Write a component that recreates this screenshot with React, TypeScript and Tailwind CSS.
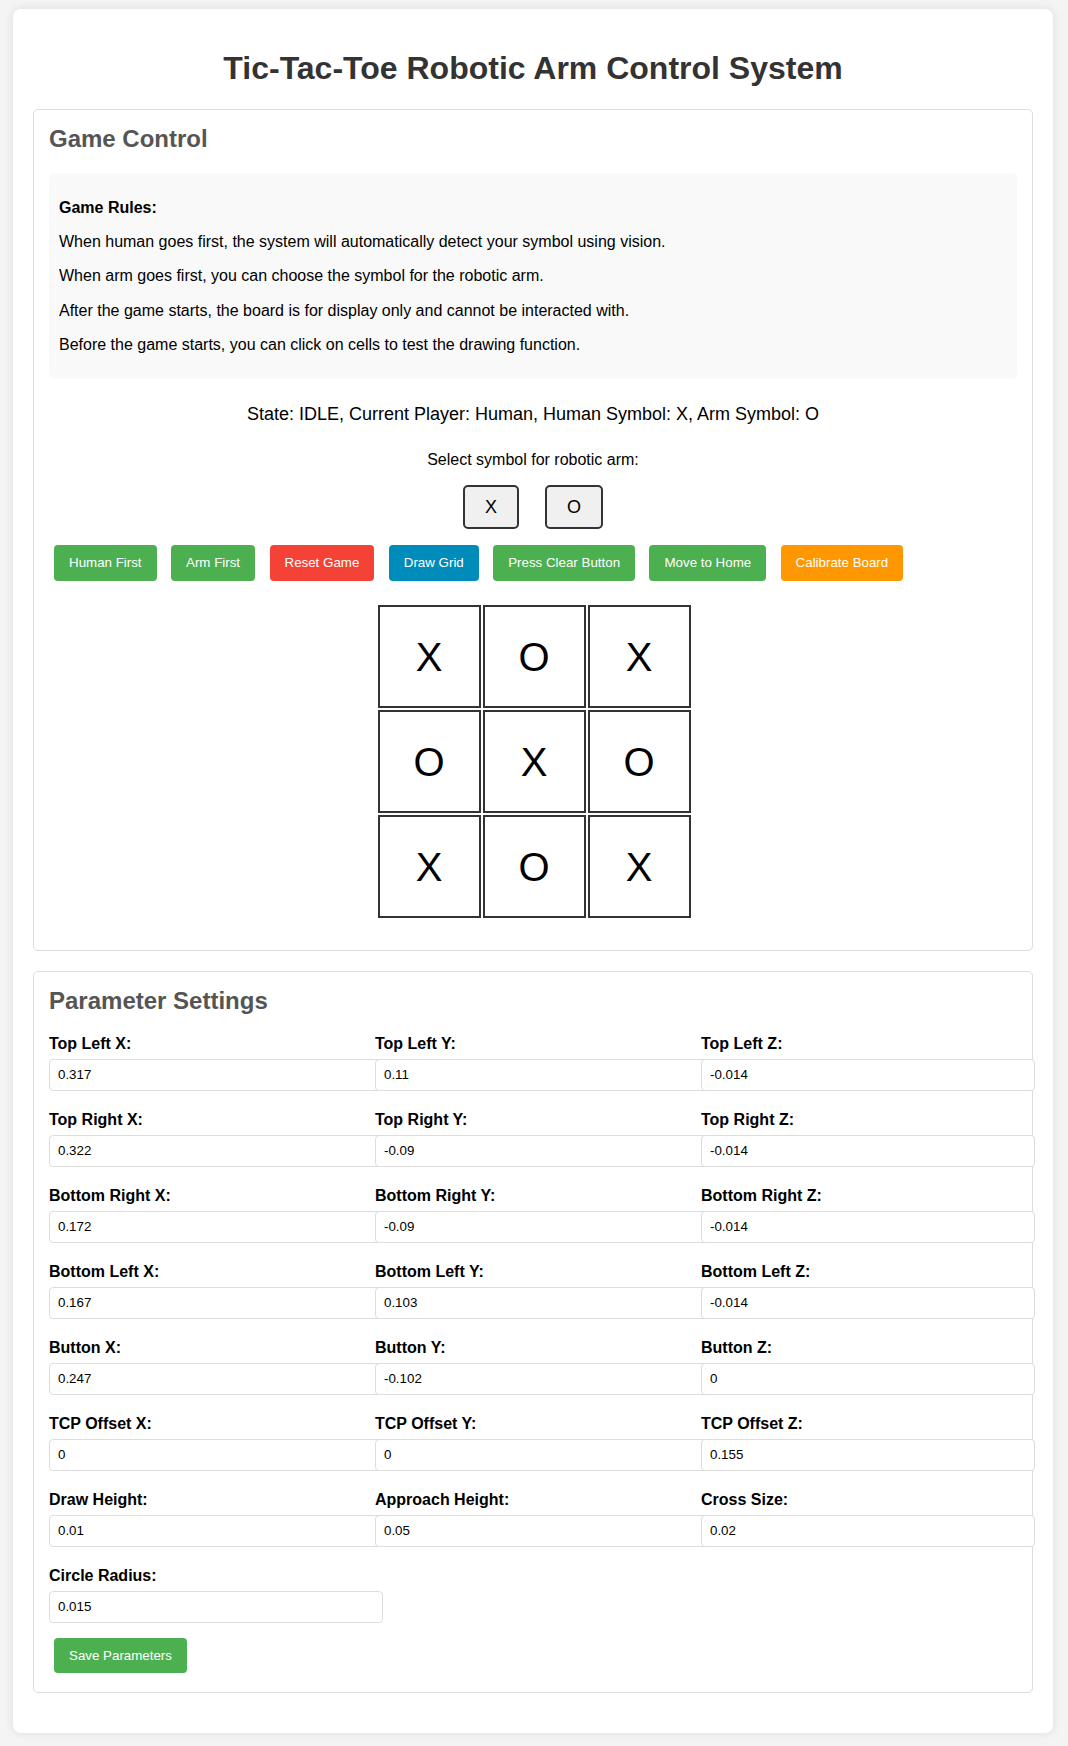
import React from "react";

const actions: { label: string; bg: string }[] = [
  { label: "Human First", bg: "bg-[#4CAF50]" },
  { label: "Arm First", bg: "bg-[#4CAF50]" },
  { label: "Reset Game", bg: "bg-[#f44336]" },
  { label: "Draw Grid", bg: "bg-[#008CBA]" },
  { label: "Press Clear Button", bg: "bg-[#4CAF50]" },
  { label: "Move to Home", bg: "bg-[#4CAF50]" },
  { label: "Calibrate Board", bg: "bg-[#ff9800]" },
];

const board = ["X", "O", "X", "O", "X", "O", "X", "O", "X"];

const params: [string, string][] = [
  ["Top Left X:", "0.317"],
  ["Top Left Y:", "0.11"],
  ["Top Left Z:", "-0.014"],
  ["Top Right X:", "0.322"],
  ["Top Right Y:", "-0.09"],
  ["Top Right Z:", "-0.014"],
  ["Bottom Right X:", "0.172"],
  ["Bottom Right Y:", "-0.09"],
  ["Bottom Right Z:", "-0.014"],
  ["Bottom Left X:", "0.167"],
  ["Bottom Left Y:", "0.103"],
  ["Bottom Left Z:", "-0.014"],
  ["Button X:", "0.247"],
  ["Button Y:", "-0.102"],
  ["Button Z:", "0"],
  ["TCP Offset X:", "0"],
  ["TCP Offset Y:", "0"],
  ["TCP Offset Z:", "0.155"],
  ["Draw Height:", "0.01"],
  ["Approach Height:", "0.05"],
  ["Cross Size:", "0.02"],
  ["Circle Radius:", "0.015"],
];

export default function App() {
  return (
    <div
      className="min-h-screen bg-[#f4f4f4] pt-[9px] pb-[13px] text-black"
      style={{ fontFamily: '"Liberation Sans", Arial, sans-serif' }}
    >
      <div className="ml-[13px] w-[1040px] bg-white rounded-[8px] p-[20px] shadow-[0_0_10px_rgba(0,0,0,0.1)]">
        <h1 className="text-center text-[32px] font-bold leading-[37px] text-[#333] mt-[21px] mb-[22px]">
          Tic-Tac-Toe Robotic Arm Control System
        </h1>

        {/* Game Control */}
        <section className="border border-[#ddd] rounded-[5px] p-[15px] mb-[20px]">
          <h2 className="text-[24px] font-bold leading-[27.6px] text-[#555] mb-[20px]">
            Game Control
          </h2>
          <div className="bg-[#f9f9f9] rounded-[5px] px-[10px] pt-[10px] pb-[8px] text-[16px] leading-[18.4px]">
            <p className="my-[16px] font-bold">Game Rules:</p>
            <p className="my-[16px]">
              When human goes first, the system will automatically detect your symbol using vision.
            </p>
            <p className="my-[16px]">
              When arm goes first, you can choose the symbol for the robotic arm.
            </p>
            <p className="my-[16px]">
              After the game starts, the board is for display only and cannot be interacted with.
            </p>
            <p className="my-[16px]">
              Before the game starts, you can click on cells to test the drawing function.
            </p>
          </div>

          <div className="mt-[25px] text-center text-[18px] leading-[20.7px]">
            State: IDLE, Current Player: Human, Human Symbol: X, Arm Symbol: O
          </div>

          <div className="mt-[27px] text-center text-[16px] leading-[18.4px]">
            Select symbol for robotic arm:
          </div>

          <div className="mt-[15px] flex justify-center gap-[26px]">
            <button className="border-2 border-[#333] bg-[#f0f0f0] rounded-[5px] px-[20px] py-[10px] text-[18px] leading-[20px]">
              X
            </button>
            <button className="border-2 border-[#333] bg-[#f0f0f0] rounded-[5px] px-[20px] py-[10px] text-[18px] leading-[20px]">
              O
            </button>
          </div>

          <div className="mt-[16.6px] px-[5px] flex flex-wrap gap-[14.45px]">
            {actions.map((a) => (
              <button
                key={a.label}
                className={`${a.bg} text-white rounded-[4px] px-[15px] py-[10px] text-[13.33px] leading-[15.33px]`}
              >
                {a.label}
              </button>
            ))}
          </div>

          <div className="mt-[24.7px] mb-[17px] flex justify-center">
            <div className="grid grid-cols-[repeat(3,103px)] grid-rows-[repeat(3,103px)] gap-[2px] ml-[2px]">
              {board.map((s, i) => (
                <div
                  key={i}
                  className="border-2 border-[#333] bg-white flex items-center justify-center text-[40px] leading-none text-black"
                >
                  {s}
                </div>
              ))}
            </div>
          </div>
        </section>

        {/* Parameter Settings */}
        <section className="border border-[#ddd] rounded-[5px] p-[15px] mb-[20px]">
          <h2 className="text-[24px] font-bold leading-[27.6px] text-[#555] mb-[20px]">
            Parameter Settings
          </h2>
          <div className="grid grid-cols-3 gap-[10px]">
            {params.map(([label, value]) => (
              <div key={label} className="mb-[10px]">
                <label className="block text-[16px] font-bold leading-[18.4px] mb-[5.5px]">
                  {label}
                </label>
                <input
                  type="text"
                  defaultValue={value}
                  className="block h-[32.1px] w-[calc(100%+18px)] max-w-none bg-white border border-[#ddd] rounded-[4px] px-[8px] py-0 text-[13.33px] text-black"
                />
              </div>
            ))}
          </div>
          <button className="ml-[5px] mt-[5px] mb-[4px] bg-[#4CAF50] text-white rounded-[4px] px-[15px] py-[10px] text-[13.33px] leading-[15.33px]">
            Save Parameters
          </button>
        </section>
      </div>
    </div>
  );
}
